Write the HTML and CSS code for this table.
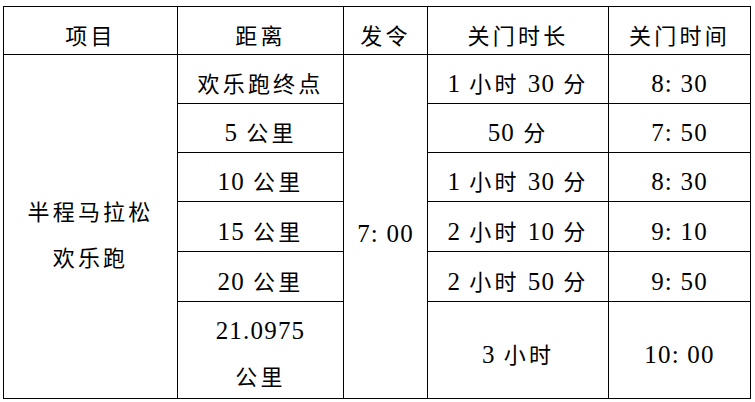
FILE: index.html
```html
<!DOCTYPE html>
<html lang="zh-CN">
<head>
<meta charset="utf-8">
<title>关门时间</title>
<link rel="stylesheet" href="styles.css">
</head>
<body>
<table class="schedule">
  <colgroup>
    <col class="c-item">
    <col class="c-dist">
    <col class="c-start">
    <col class="c-dur">
    <col class="c-time">
  </colgroup>
  <tr class="r-head">
    <td>项目</td>
    <td>距离</td>
    <td>发令</td>
    <td>关门时长</td>
    <td>关门时间</td>
  </tr>
  <tr class="r-49">
    <td rowspan="6" class="multi">半程马拉松<br>欢乐跑</td>
    <td>欢乐跑终点</td>
    <td rowspan="6" class="start"><span class="num">7: 00</span></td>
    <td><span class="num">1</span> 小时 <span class="num">30</span> 分</td>
    <td><span class="num">8: 30</span></td>
  </tr>
  <tr class="r-49">
    <td><span class="num">5</span> 公里</td>
    <td><span class="num">50</span> 分</td>
    <td><span class="num">7: 50</span></td>
  </tr>
  <tr class="r-49">
    <td><span class="num">10</span> 公里</td>
    <td><span class="num">1</span> 小时 <span class="num">30</span> 分</td>
    <td><span class="num">8: 30</span></td>
  </tr>
  <tr class="r-50">
    <td><span class="num">15</span> 公里</td>
    <td><span class="num">2</span> 小时 <span class="num">10</span> 分</td>
    <td><span class="num">9: 10</span></td>
  </tr>
  <tr class="r-50">
    <td><span class="num">20</span> 公里</td>
    <td><span class="num">2</span> 小时 <span class="num">50</span> 分</td>
    <td><span class="num">9: 50</span></td>
  </tr>
  <tr class="r-last">
    <td class="tall"><span class="num">21.0975</span><br>公里</td>
    <td><span class="num">3</span> 小时</td>
    <td><span class="num">10: 00</span></td>
  </tr>
</table>
</body>
</html>
```
FILE: styles.css
```css
html, body {
  margin: 0;
  padding: 0;
  background: #ffffff;
}

body {
  padding: 6px 0 0 3px;
}

.schedule {
  border-collapse: collapse;
  table-layout: fixed;
  width: 747px;
  font-family: "Noto Sans CJK SC", "Liberation Serif", sans-serif;
  font-size: 22px;
  font-weight: 400;
  letter-spacing: 3.2px;
  color: #000000;
}

.num {
  font-family: "Liberation Serif", serif;
  font-size: 25px;
  line-height: 14px;
  letter-spacing: 1.2px;
}

.c-item { width: 174px; }
.c-dist { width: 166px; }
.c-start { width: 84px; }
.c-dur { width: 181px; }
.c-time { width: 142px; }

.schedule td {
  border: 1px solid #000000;
  text-align: center;
  vertical-align: middle;
  padding: 6px 0 0 0;
  line-height: 26px;
  white-space: nowrap;
}

.r-head td { height: 41px; }
.r-49 td { height: 42px; }
.r-50 td { height: 43px; }
.r-last td { height: 89px; }

.schedule td.multi {
  line-height: 46px;
  padding-top: 12px;
}

.schedule td.tall {
  line-height: 46px;
  padding-top: 4px;
}

.schedule td.start {
  padding-top: 10px;
}
```
